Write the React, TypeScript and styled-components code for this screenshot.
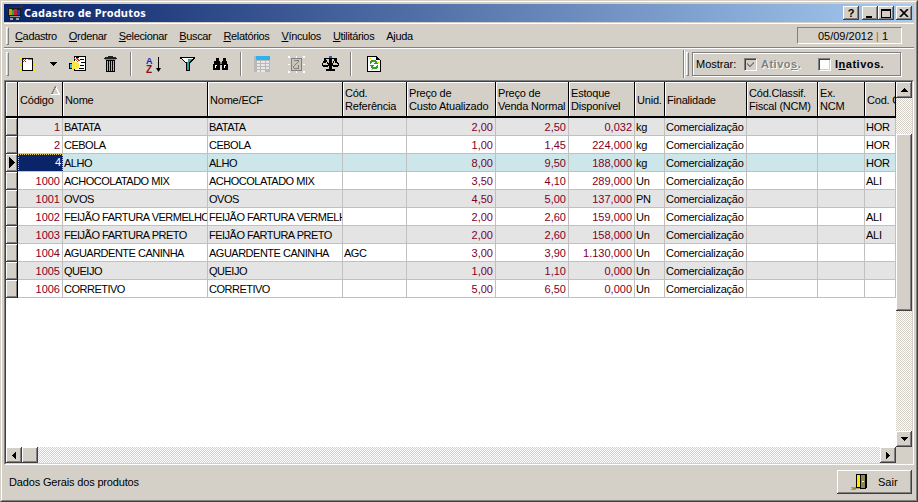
import React from "react";
import styled, { createGlobalStyle } from "styled-components";

const FONT = `"Liberation Sans", "Noto Sans", sans-serif`;
const TITLE_FONT = `"Noto Sans", "Liberation Sans", sans-serif`;
const FACE = "#d4d0c8";
const COLS = [12, 45, 145, 135, 64, 89, 73, 66, 30, 82, 71, 47, 31];
const TEMPLATE = COLS.map((c) => `${c}px`).join(" ");

const Global = createGlobalStyle`
  html, body { margin: 0; padding: 0; background: ${FACE}; overflow: hidden; }
  * { box-sizing: border-box; }
  svg { display: block; shape-rendering: crispEdges; }
`;

const Win = styled.div`
  width: 918px; height: 502px; background: ${FACE};
  border: 1px solid; border-color: ${FACE} #404040 #404040 ${FACE};
  font: 11px ${FONT}; color: #000; overflow: hidden;
`;
const WinInner = styled.div`
  height: 100%; padding: 2px; display: flex; flex-direction: column;
  border: 1px solid; border-color: #fff #808080 #808080 #fff;
`;
const TitleBar = styled.div`
  height: 18px; flex: none; display: flex; align-items: center;
  background: linear-gradient(90deg, #0a246a, #a6caf0);
  padding: 0 2px;
`;
const TitleText = styled.span`
  margin-left: 0; padding-bottom: 2px; color: #fff; font: bold 11px ${TITLE_FONT}; flex: 1; letter-spacing: 0.2px;
`;
const CapBtn = styled.button<{ $gap?: number }>`
  width: 16px; height: 14px; padding: 0; margin-left: ${(p) => p.$gap ?? 0}px;
  background: ${FACE}; font: bold 11px "Liberation Sans", sans-serif; color: #000;
  display: flex; align-items: center; justify-content: center;
  border: 0; box-shadow: inset -1px -1px 0 #404040, inset 1px 1px 0 #fff, inset -2px -2px 0 #808080;
`;
const MenuBand = styled.div`
  height: 25px; flex: none; margin-top: 1px; display: flex; align-items: center; padding-left: 2px;
  border-top: 1px solid #fff; border-bottom: 1px solid #808080; box-shadow: 0 1px 0 #fff;
`;
const Grip = styled.div<{ $h: number }>`
  width: 3px; height: ${(p) => p.$h}px; flex: none; background: ${FACE};
  border: 1px solid; border-color: #fff #808080 #808080 #fff;
`;
const MenuList = styled.div`
  display: flex; gap: 12px; margin-left: 6px; flex: 1; padding-top: 1px;
`;
const MenuItem = styled.span`
  color: #000; letter-spacing: -0.35px;
  u { text-underline-offset: 1px; }
`;
const DatePanel = styled.div`
  width: 105px; height: 17px; margin-right: 12px; display: flex; align-items: center; justify-content: flex-end;
  padding-right: 13px; border: 1px solid; border-color: #808080 #fff #fff #808080;
`;
const Pipe = styled.span`
  color: #c06000; margin: 0 3px;
`;
const ToolBand = styled.div`
  height: 30px; flex: none; margin-top: 1px; display: flex; align-items: center; padding-left: 2px;
`;
const Tool = styled.div<{ $w?: number }>`
  width: ${(p) => p.$w ?? 33}px; height: 24px; flex: none;
  display: flex; align-items: center; justify-content: center;
`;
const Sep = styled.div<{ $l: number; $r: number }>`
  width: 2px; height: 24px; flex: none; margin: 0 ${(p) => p.$r}px 0 ${(p) => p.$l}px;
  border-left: 1px solid #808080; border-right: 1px solid #fff;
`;
const Spacer = styled.div`
  flex: 1;
`;
const BandSep = styled(Sep)`
  height: 28px;
`;
const ShowBox = styled.div`
  width: 209px; height: 24px; margin: 0 13px 0 3px; display: flex; align-items: center; padding-left: 3px;
  border: 1px solid #808080; box-shadow: 1px 1px 0 #fff, inset 1px 1px 0 #fff;
`;
const ShowLabel = styled.span`
  width: 48px; flex: none; color: #000;
`;
const Check = styled.span<{ $disabled?: boolean }>`
  width: 13px; height: 13px; flex: none; display: flex; align-items: center; justify-content: center;
  background: ${(p) => (p.$disabled ? FACE : "#fff")};
  border: 1px solid; border-color: #808080 #fff #fff #808080;
  box-shadow: inset 1px 1px 0 #404040, inset -1px -1px 0 ${FACE};
`;
const CheckLabel = styled.span<{ $disabled?: boolean; $w: number }>`
  width: ${(p) => p.$w}px; flex: none; margin-left: 4px; font-weight: bold; letter-spacing: 0.5px;
  color: ${(p) => (p.$disabled ? "#808080" : "#000")};
  text-shadow: ${(p) => (p.$disabled ? "1px 1px 0 #fff" : "none")};
`;
const GridFrame = styled.div`
  height: 385px; flex: none; margin-top: 1px; padding: 0;
  border: 1px solid; border-color: #808080 #fff #fff #808080;
`;
const GridInner = styled.div`
  height: 100%; background: ${FACE};
  border: 1px solid; border-color: #404040 ${FACE} ${FACE} #404040;
  display: grid; grid-template-columns: 890px 16px; grid-template-rows: 365px 16px;
`;
const Table = styled.div`
  background: #fff; overflow: hidden;
`;
const HeadRow = styled.div`
  display: grid; grid-template-columns: ${TEMPLATE}; height: 36px;
`;
const HeadCell = styled.div`
  position: relative; background: ${FACE}; padding: 2px 1px 0 2px; overflow: hidden; white-space: nowrap;
  display: flex; align-items: center; line-height: 13px; letter-spacing: -0.2px;
  border-right: 1px solid #000; border-bottom: 2px solid #000;
  box-shadow: inset 1px 1px 0 #fff;
`;
const HeadLabel = styled.span`
  white-space: pre;
`;
const SortMark = styled.svg`
  position: absolute; left: 33px; top: 4px;
`;
const Row = styled.div<{ $bg: string }>`
  display: grid; grid-template-columns: ${TEMPLATE}; height: 18px; background: ${(p) => p.$bg};
`;
const Indicator = styled.div`
  background: ${FACE}; display: flex; align-items: center; justify-content: center;
  border-right: 1px solid #000; border-bottom: 1px solid #404040;
  box-shadow: inset 1px 1px 0 #fff, inset -1px -1px 0 #808080;
`;
const Cell = styled.div<{ $right?: boolean; $red?: boolean; $caps?: boolean }>`
  padding: 0 2px 0 1px; line-height: 19px; overflow: hidden; white-space: nowrap;
  text-align: ${(p) => (p.$right ? "right" : "left")};
  color: ${(p) => (p.$red ? "#800028" : "#000")};
  letter-spacing: ${(p) => (p.$red ? "0" : p.$caps ? "-0.5px" : "-0.25px")};
  border-right: 1px solid #c0c0c0; border-bottom: 1px solid #c0c0c0;
`;
const SelectedCell = styled.div`
  background: #0a246a; color: #fff; text-align: right; padding: 0 2px; line-height: 17px;
  outline: 1px dotted #e8d060; outline-offset: -1px; border-bottom: 1px solid #c0c0c0;
`;
const Track = styled.div<{ $dir: "v" | "h" }>`
  display: flex; flex-direction: ${(p) => (p.$dir === "v" ? "column" : "row")};
  background: repeating-conic-gradient(#fff 0 25%, ${FACE} 0 50%) 0 0 / 2px 2px;
`;
const ScrollBtn = styled.div<{ $len?: number; $dir?: "v" | "h" }>`
  flex: none; background: ${FACE}; display: flex; align-items: center; justify-content: center;
  ${(p) => (p.$dir === "v" ? `height: ${p.$len ?? 16}px;` : `width: ${p.$len ?? 16}px;`)}
  box-shadow: inset -1px -1px 0 #404040, inset 1px 1px 0 #fff, inset -2px -2px 0 #808080;
`;
const Gap = styled.div<{ $len: number; $grow?: boolean }>`
  flex: ${(p) => (p.$grow ? "1" : `0 0 ${p.$len}px`)};
`;
const Corner = styled.div`
  background: ${FACE};
`;
const StatusBar = styled.div`
  flex: 1; display: flex; align-items: center; justify-content: space-between; padding: 0 2px 0 5px;
`;
const StatusText = styled.span`
  letter-spacing: -0.16px;
`;
const ExitBtn = styled.button`
  width: 75px; height: 24px; padding: 0 0 0 14px; background: ${FACE}; border: 0; color: #000; font: 11px ${FONT};
  display: flex; align-items: center; gap: 10px;
  box-shadow: inset -1px -1px 0 #404040, inset 1px 1px 0 #fff, inset -2px -2px 0 #808080;
`;

const Logo = () => (
  <svg width="18" height="16" viewBox="0 0 18 16">
    <path d="M1 3h2v2H1zM3 2h13v1H3zM14 0h3v2h-3z" fill="#30303a" />
    <rect x="2" y="3" width="13" height="8" fill="#1a1a1a" />
    <rect x="3" y="4" width="3" height="6" fill="#c0a000" />
    <rect x="6" y="5" width="2" height="5" fill="#30a030" />
    <rect x="8" y="4" width="3" height="6" fill="#c02040" />
    <rect x="11" y="5" width="3" height="5" fill="#2040a0" />
    <rect x="4" y="11" width="10" height="1" fill="#909090" />
    <rect x="4" y="13" width="3" height="2" fill="#a0a0a0" />
    <rect x="10" y="13" width="3" height="2" fill="#a0a0a0" />
  </svg>
);
const CloseGlyph = () => (
  <svg width="10" height="8" viewBox="0 0 10 8" style={{ shapeRendering: "auto" }}>
    <path d="M1 0l8 8M9 0l-8 8" stroke="#000" strokeWidth="1.7" />
  </svg>
);
const MinGlyph = () => (
  <svg width="10" height="9" viewBox="0 0 10 9"><rect x="1" y="7" width="6" height="2" fill="#000" /></svg>
);
const MaxGlyph = () => (
  <svg width="10" height="9" viewBox="0 0 10 9"><path d="M0 0h10v2H0zM0 2h1v7H0zM9 2h1v7H9zM0 8h10v1H0z" fill="#000" /></svg>
);
const NewIcon = () => (
  <svg width="17" height="17" viewBox="0 0 17 17">
    <path d="M8 0h1v2H8zM1 1h1v1h1v1H1zM14 1h2v1h-1v1h-1zM0 8h2v1H0zM15 8h2v1h-2zM1 14h2v1H2v1H1zM14 14h2v2h-1v-1h-1zM8 15h1v2H8z" fill="#ffe800" />
    <rect x="3" y="2" width="11" height="13" fill="#000" />
    <rect x="4" y="3" width="9" height="11" fill="#fff" />
    <path d="M4 3h1v1H4zM6 3h1v1H6zM5 4h1v1H5zM4 5h1v1H4zM6 5h1v1H6z" fill="#c02020" />
    <path d="M9 3h4v1H9z" fill="#40b0b0" />
  </svg>
);
const CaretDown = () => (
  <svg width="7" height="4" viewBox="0 0 7 4"><path d="M0 0h7v1H6v1H5v1H4v1H3V3H2V2H1V1H0z" fill="#000" /></svg>
);
const PropsIcon = () => (
  <svg width="17" height="16" viewBox="0 0 17 16">
    <rect x="5" y="0" width="12" height="15" fill="#000" />
    <rect x="6" y="1" width="10" height="13" fill="#fff" />
    <path d="M7 1h3v1H7zM11 3h4v1h-4zM12 6h4v1h-4zM11 9h4v1h-4zM10 12h5v1h-5z" fill="#000" />
    <path d="M7 2l2 0 2 3-2 0z" fill="#d02020" />
    <rect x="0" y="7" width="8" height="6" fill="#000" />
    <rect x="1" y="8" width="2" height="4" fill="#40c0e0" />
    <path d="M3 5h3v1h2v1h2v5H9v1H3z" fill="#ffe840" />
    <path d="M5 2h1v1h1v1h1v1h1v1H8V5H7V4H6V3H5z" fill="#808040" />
  </svg>
);
const TrashIcon = () => (
  <svg width="13" height="16" viewBox="0 0 13 16">
    <path d="M4 0h5v1H4zM1 1h11v1H1zM0 2h13v1H0z" fill="#202020" />
    <rect x="1" y="3" width="11" height="1" fill="#808080" />
    <rect x="2" y="4" width="9" height="12" fill="#000" />
    <path d="M3 5h1v10H3zM5 5h1v10H5zM7 5h1v10H7zM9 5h1v10H9z" fill="#b0b0b0" />
  </svg>
);
const SortIcon = () => (
  <svg width="17" height="17" viewBox="0 0 17 17" style={{ shapeRendering: "auto" }}>
    <text x="0" y="7.5" fontFamily="Liberation Sans" fontWeight="bold" fontSize="9" fill="#1020c0">A</text>
    <text x="0" y="16.5" fontFamily="Liberation Sans" fontWeight="bold" fontSize="10" fill="#901010">Z</text>
    <path d="M12.5 1v12" stroke="#000" strokeWidth="1" />
    <path d="M10 12h5l-2.5 4z" fill="#000" />
  </svg>
);
const FunnelIcon = () => (
  <svg width="15" height="14" viewBox="0 0 15 14">
    <path d="M0 0h15v2h-1v1h-1v1h-1v1h-1v1h-1v8H6V6H5V5H4V4H3V3H2V2H0z" fill="#000" />
    <path d="M2 1h11v1h-1v1h-1v1h-1v1H5V4H4V3H3V2H2z" fill="#fff" />
    <path d="M7 5h2v8H7zM8 2h4v1h-1v1h-1v1H8z" fill="#30a0a0" />
  </svg>
);
const BinocIcon = () => (
  <svg width="16" height="14" viewBox="0 0 16 14">
    <path d="M3 1h3v3h1v1h2V4h1V1h3v3h1v3h1v6H9V8H7v5H0V7h1V4h2z" fill="#000" />
    <path d="M2 8h2v1H3v2H2zM11 8h2v1h-1v2h-1z" fill="#fff" />
    <rect x="7" y="5" width="2" height="2" fill="#808080" />
  </svg>
);
const TableIcon = () => (
  <svg width="16" height="16" viewBox="0 0 16 16">
    <rect x="0" y="0" width="16" height="16" fill="#b8b8b8" />
    <rect x="2" y="0" width="14" height="4" fill="#30b0f0" />
    <path d="M3 5h3v2H3zM7 5h4v2H7zM12 5h3v2h-3zM3 8h3v2H3zM7 8h4v2H7zM12 8h3v2h-3zM3 11h3v2H3zM7 11h4v2H7zM12 11h3v2h-3zM3 14h3v2H3zM7 14h4v2H7z" fill="#e8e8e8" />
  </svg>
);
const DisabledIcon = () => (
  <svg width="17" height="17" viewBox="0 0 17 17">
    <path d="M0 0h2v2H0zM8 0h1v2H8zM15 0h2v2h-2zM0 8h2v1H0zM15 8h2v1h-2zM0 15h2v2H0zM8 15h1v2H8zM15 15h2v2h-2z" fill="#fff" />
    <rect x="3" y="2" width="11" height="13" fill="#808080" />
    <rect x="4" y="3" width="9" height="11" fill="#c8c4bc" />
    <path d="M6 4h5v1H6zM10 5h1v1h-1zM9 6h1v1H9zM8 7h1v1H8zM7 8h1v1H7zM6 9h1v1H6zM5 10h1v2H5zM6 12h5v1H6zM10 9h1v3h-1z" fill="#808080" />
  </svg>
);
const ScaleIcon = () => (
  <svg width="17" height="16" viewBox="0 0 17 16">
    <rect x="7" y="0" width="3" height="2" fill="#2060e0" />
    <path d="M2 2h13v1H2zM7 3h3v10H7zM4 13h9v2H4zM2 3h2v4H2zM13 3h2v4h-2z" fill="#000" />
    <path d="M3 3L0 9h7zM13 3l-3 6h7z" fill="none" stroke="#000" />
    <path d="M0 9h7v1H6v1H1v-1H0zM10 9h7v1h-1v1h-5v-1h-1z" fill="#000" />
  </svg>
);
const RefreshIcon = () => (
  <svg width="14" height="16" viewBox="0 0 14 16">
    <path d="M0 0h10v1h1v1h1v1h1v1h1v12H0z" fill="#000" />
    <path d="M1 1h8v3h4v11H1z" fill="#fff" />
    <path d="M4 4h5v1h1v2h1v1H7V7h1V6H5v1H4v1H3V5h1zM3 9h4v1H6v1h3v-1h1V9h1v3h-1v1H5v-1H4v-2H3z" fill="#30a020" />
    <path d="M2 2h2v1H2zM4 13h2v1H4zM10 6h2v1h-2z" fill="#e0e000" />
  </svg>
);
const DoorIcon = () => (
  <svg width="17" height="17" viewBox="0 0 17 17">
    <path d="M0 14h5v1H0zM1 15h4v1H1zM0 16h5v1H0z" fill="#b0a030" />
    <path d="M2 15h8v1H2z" fill="#808040" opacity="0.6" />
    <rect x="5" y="1" width="11" height="14" fill="#000" />
    <path d="M6 2h4v12H6z" fill="#ffe800" />
    <path d="M9 1h6v15H9z" fill="#000" />
    <path d="M10 2h4v13h-4z" fill="#8a8a50" />
    <rect x="11" y="8" width="2" height="1" fill="#fff" />
  </svg>
);
const TriUp = () => (
  <svg width="7" height="4" viewBox="0 0 7 4"><path d="M3 0h1v1h1v1h1v1h1v1H0V3h1V2h1V1h1z" fill="#000" /></svg>
);
const TriDown = () => (
  <svg width="7" height="4" viewBox="0 0 7 4"><path d="M0 0h7v1H6v1H5v1H4v1H3V3H2V2H1V1H0z" fill="#000" /></svg>
);
const TriLeft = () => (
  <svg width="4" height="7" viewBox="0 0 4 7"><path d="M3 0h1v7H3V6H2V5H1V4H0V3h1V2h1V1h1z" fill="#000" /></svg>
);
const TriRight = () => (
  <svg width="4" height="7" viewBox="0 0 4 7"><path d="M0 0h1v1h1v1h1v1h1v1H3v1H2v1H1v1H0z" fill="#000" /></svg>
);
const RowMark = () => (
  <svg width="6" height="11" viewBox="0 0 6 11"><path d="M0 0h1v1h1v1h1v1h1v1h1v1h1v1H5v1H4v1H3v1H2v1H1v1H0z" fill="#000" /></svg>
);
const CheckGlyph = () => (
  <svg width="9" height="9" viewBox="0 0 9 9"><path d="M8 1v2L4 7.5 1 5V3l3 2z" fill="#808080" /></svg>
);

const MENUS: [string, string, string][] = [
  ["", "C", "adastro"], ["", "O", "rdenar"], ["", "S", "elecionar"], ["", "B", "uscar"],
  ["", "R", "elatórios"], ["", "V", "ínculos"], ["", "U", "tilitários"], ["A", "j", "uda"],
];
const HEADERS = [
  "", "Código", "Nome", "Nome/ECF", "Cód.\nReferência", "Preço de\nCusto Atualizado",
  "Preço de\nVenda Normal", "Estoque\nDisponível", "Unid.", "Finalidade",
  "Cód.Classif.\nFiscal (NCM)", "Ex.\nNCM", "Cod. Grupo",
];
type P = [string, string, string, string, string, string, string, string, string];
const ROWS: P[] = [
  ["1", "BATATA", "BATATA", "", "2,00", "2,50", "0,032", "kg", "HOR"],
  ["2", "CEBOLA", "CEBOLA", "", "1,00", "1,45", "224,000", "kg", "HOR"],
  ["4", "ALHO", "ALHO", "", "8,00", "9,50", "188,000", "kg", "HOR"],
  ["1000", "ACHOCOLATADO MIX", "ACHOCOLATADO MIX", "", "3,50", "4,10", "289,000", "Un", "ALI"],
  ["1001", "OVOS", "OVOS", "", "4,50", "5,00", "137,000", "PN", ""],
  ["1002", "FEIJÃO FARTURA VERMELHO", "FEIJÃO FARTURA VERMELHO", "", "2,00", "2,60", "159,000", "Un", "ALI"],
  ["1003", "FEIJÃO FARTURA PRETO", "FEIJÃO FARTURA PRETO", "", "2,00", "2,60", "158,000", "Un", "ALI"],
  ["1004", "AGUARDENTE CANINHA", "AGUARDENTE CANINHA", "AGC", "3,00", "3,90", "1.130,000", "Un", ""],
  ["1005", "QUEIJO", "QUEIJO", "", "1,00", "1,10", "0,000", "Un", ""],
  ["1006", "CORRETIVO", "CORRETIVO", "", "5,00", "6,50", "0,000", "Un", ""],
];
const ROW_BG = ["#e4e4e4", "#fff", "#cde6ea", "#fff", "#e4e4e4", "#fff", "#e4e4e4", "#fff", "#e4e4e4", "#fff"];

export default function App() {
  return (
    <Win>
      <Global />
      <WinInner>
        <TitleBar>
          <Logo />
          <TitleText>Cadastro de Produtos</TitleText>
          <CapBtn>?</CapBtn>
          <CapBtn $gap={3}><MinGlyph /></CapBtn>
          <CapBtn><MaxGlyph /></CapBtn>
          <CapBtn $gap={2}><CloseGlyph /></CapBtn>
        </TitleBar>
        <MenuBand>
          <Grip $h={18} />
          <MenuList>
            {MENUS.map(([a, u, b]) => (
              <MenuItem key={a + u + b}>{a}<u>{u}</u>{b}</MenuItem>
            ))}
          </MenuList>
          <DatePanel>05/09/2012<Pipe>|</Pipe>1</DatePanel>
        </MenuBand>
        <ToolBand>
          <Grip $h={24} />
          <Tool $w={36}><NewIcon /></Tool>
          <Tool $w={16}><CaretDown /></Tool>
          <Tool><PropsIcon /></Tool>
          <Tool><TrashIcon /></Tool>
          <Sep $l={3} $r={6} />
          <Tool><SortIcon /></Tool>
          <Tool><FunnelIcon /></Tool>
          <Tool><BinocIcon /></Tool>
          <Sep $l={3} $r={3} />
          <Tool><TableIcon /></Tool>
          <Tool $w={36}><DisabledIcon /></Tool>
          <Tool><ScaleIcon /></Tool>
          <Sep $l={3} $r={5} />
          <Tool><RefreshIcon /></Tool>
          <Spacer />
          <BandSep $l={0} $r={1} />
          <Grip $h={24} />
          <ShowBox>
            <ShowLabel>Mostrar:</ShowLabel>
            <Check $disabled><CheckGlyph /></Check>
            <CheckLabel $disabled $w={57}>Ativo<u>s</u>.</CheckLabel>
            <Check />
            <CheckLabel $w={56}>I<u>n</u>ativos.</CheckLabel>
          </ShowBox>
        </ToolBand>
        <GridFrame>
          <GridInner>
            <Table>
              <HeadRow>
                {HEADERS.map((h, i) => (
                  <HeadCell key={i}>
                    <HeadLabel>{h}</HeadLabel>
                    {i === 1 && (
                      <SortMark width="9" height="9" viewBox="0 0 9 9">
                        <path d="M4.5 0.5L8.5 8.5H0.5z" fill="none" stroke="#fff" />
                        <path d="M4.5 0.5L0.5 8.5" stroke="#808080" fill="none" />
                      </SortMark>
                    )}
                  </HeadCell>
                ))}
              </HeadRow>
              {ROWS.map((r, i) => (
                <Row key={r[0]} $bg={ROW_BG[i]}>
                  <Indicator>{i === 2 && <RowMark />}</Indicator>
                  {i === 2 ? <SelectedCell>{r[0]}</SelectedCell> : <Cell $right $red>{r[0]}</Cell>}
                  <Cell $caps>{r[1]}</Cell>
                  <Cell $caps>{r[2]}</Cell>
                  <Cell $caps>{r[3]}</Cell>
                  <Cell $right $red>{r[4]}</Cell>
                  <Cell $right $red>{r[5]}</Cell>
                  <Cell $right $red>{r[6]}</Cell>
                  <Cell>{r[7]}</Cell>
                  <Cell>Comercialização</Cell>
                  <Cell />
                  <Cell />
                  <Cell>{r[8]}</Cell>
                </Row>
              ))}
            </Table>
            <Track $dir="v">
              <ScrollBtn $dir="v"><TriUp /></ScrollBtn>
              <Gap $len={36} />
              <ScrollBtn $dir="v" $len={177} />
              <Gap $len={0} $grow />
              <ScrollBtn $dir="v"><TriDown /></ScrollBtn>
            </Track>
            <Track $dir="h">
              <ScrollBtn $dir="h"><TriLeft /></ScrollBtn>
              <ScrollBtn $dir="h" />
              <Gap $len={0} $grow />
              <ScrollBtn $dir="h"><TriRight /></ScrollBtn>
            </Track>
            <Corner />
          </GridInner>
        </GridFrame>
        <StatusBar>
          <StatusText>Dados Gerais dos produtos</StatusText>
          <ExitBtn><DoorIcon />Sair</ExitBtn>
        </StatusBar>
      </WinInner>
    </Win>
  );
}
